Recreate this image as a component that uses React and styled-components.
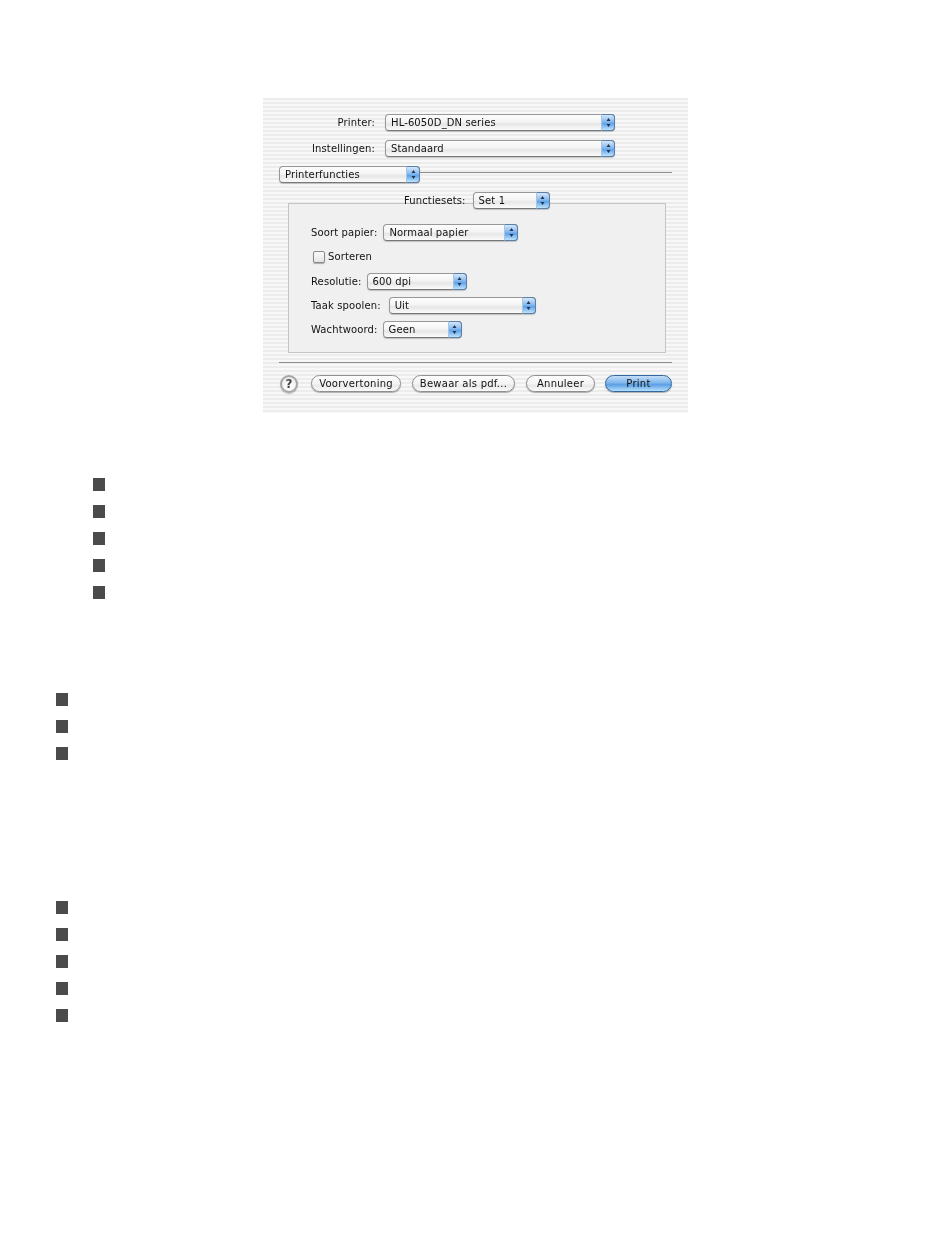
import React from 'react';
import styled, { createGlobalStyle } from 'styled-components';

const GlobalStyle = createGlobalStyle`
  html, body {
    margin: 0;
    background: #fff;
  }
  body {
    font-family: "DejaVu Sans", "Liberation Sans", sans-serif;
  }
`;

const Page = styled.div`
  width: 950px;
  height: 1254px;
  padding-top: 98px;
  box-sizing: border-box;
  overflow: hidden;
`;

const Dialog = styled.div`
  width: 425px;
  height: 315px;
  margin-left: 263px;
  padding: 16px 16px 0;
  box-sizing: border-box;
  background: repeating-linear-gradient(to bottom, #ececec 0, #ececec 2px, #f8f8f8 2px, #f8f8f8 4px);
  color: #111;
  font-size: 10px;
  letter-spacing: 0.12px;
  filter: blur(0.35px);
`;

const Row = styled.div`
  display: flex;
  align-items: center;
  height: 17px;
  margin-top: ${p => p.$top || 0}px;
`;

const Label = styled.span`
  width: ${p => p.$width}px;
  text-align: right;
  padding-right: 10px;
  box-sizing: border-box;
  white-space: nowrap;
`;

const SelectBox = styled.div`
  display: flex;
  align-items: stretch;
  width: ${p => p.$width}px;
  height: 17px;
  box-sizing: border-box;
  flex: none;
  border: 1px solid #979797;
  border-bottom-color: #777;
  border-radius: 4px;
  background: linear-gradient(to bottom, #fdfdfd 0%, #f4f4f4 45%, #e6e6e6 60%, #fbfbfb 100%);
  box-shadow: 0 1px 1px rgba(0, 0, 0, 0.2);
  position: relative;
  z-index: 1;
`;

const SelectText = styled.span`
  flex: 1;
  padding-left: 5px;
  line-height: 15px;
  white-space: nowrap;
`;

const Stepper = styled.span`
  display: flex;
  align-items: center;
  justify-content: center;
  width: 14px;
  margin: -1px -1px -1px 0;
  border-radius: 0 4px 4px 0;
  border: 1px solid #5b7fa8;
  border-left-color: #a6c6e8;
  box-sizing: border-box;
  background: linear-gradient(to bottom, #d6e7fa 0%, #86b9ee 45%, #5fa3ea 58%, #bfe3fb 100%);
`;

const Select = ({ width, children }) => (
  <SelectBox $width={width}>
    <SelectText>{children}</SelectText>
    <Stepper>
      <svg width="7" height="11" viewBox="0 0 7 11">
        <path d="M3.5 1 L5.5 4 H1.5 Z M1.5 7 H5.5 L3.5 10 Z" fill="#24344c" />
      </svg>
    </Stepper>
  </SelectBox>
);

const Rule = styled.div`
  flex: 1;
  height: 1px;
  margin-bottom: 5px;
  background: #8c8c8c;
`;

const SetsRow = styled(Row)`
  padding-left: 125px;
`;

const SetsLabel = styled.span`
  padding-right: 7px;
`;

const Panel = styled.div`
  width: 378px;
  height: 150px;
  margin: -6px 0 0 9px;
  padding: 20px 0 0 22px;
  box-sizing: border-box;
  display: flex;
  flex-direction: column;
  gap: 7.3px;
  background: #f0f0f0;
  border: 1px solid #c4c4c4;
`;

const FieldLabel = styled.span`
  margin-right: ${p => p.$gap}px;
  white-space: nowrap;
`;

const CheckRow = styled(Row)`
  padding-left: 2px;
  gap: 3px;
`;

const CheckBox = styled.span`
  width: 12px;
  height: 12px;
  box-sizing: border-box;
  border: 1px solid #8a8a8a;
  border-radius: 2px;
  background: linear-gradient(to bottom, #fafafa, #e4e4e4);
  box-shadow: 0 1px 1px rgba(0, 0, 0, 0.3);
`;

const Separator = styled.div`
  height: 1px;
  margin-top: 9px;
  background: #8c8c8c;
`;

const ButtonBar = styled.div`
  display: flex;
  align-items: center;
  height: 17px;
  margin-top: 12px;
  letter-spacing: 0.25px;
`;

const HelpButton = styled.span`
  display: flex;
  align-items: center;
  justify-content: center;
  width: 18px;
  height: 18px;
  margin: 0 13px 0 1px;
  box-sizing: border-box;
  flex: none;
  border: 2px solid #a6a6a6;
  border-radius: 50%;
  background: radial-gradient(circle at 50% 70%, #fff 0%, #f2f2f2 60%, #dcdcdc 100%);
  box-shadow: 0 1px 1px rgba(0, 0, 0, 0.25);
  font-size: 12px;
  font-weight: bold;
  color: #444;
`;

const PushButton = styled.span`
  display: flex;
  align-items: center;
  justify-content: center;
  width: ${p => p.$width}px;
  height: 17px;
  margin-right: ${p => p.$gap || 0}px;
  box-sizing: border-box;
  flex: none;
  border: 1px solid ${p => (p.$primary ? '#34679f' : '#8f8f8f')};
  border-radius: 9px;
  background: ${p =>
    p.$primary
      ? 'linear-gradient(to bottom, #c4def7 0%, #7fb6ec 45%, #5c9fe6 58%, #b5e0fb 100%)'
      : 'linear-gradient(to bottom, #fdfdfd 0%, #f4f4f4 50%, #e9e9e9 65%, #fbfbfb 100%)'};
  box-shadow: 0 1px 1px rgba(0, 0, 0, 0.3);
  white-space: nowrap;
`;

const BulletList = styled.ul`
  list-style: none;
  margin: ${p => p.$top}px 0 0 ${p => p.$left}px;
  padding: 0;
  display: flex;
  flex-direction: column;
  gap: 14px;
`;

const Bullet = styled.li`
  width: 12px;
  height: 13px;
  background: #4b4b4b;
`;

const Bullets = ({ count, top, left }) => (
  <BulletList $top={top} $left={left}>
    {Array.from({ length: count }, (_, i) => <Bullet key={i} />)}
  </BulletList>
);

export default function App() {
  return (
    <Page>
      <GlobalStyle />
      <Dialog>
        <Row>
          <Label $width={106}>Printer:</Label>
          <Select width={230}>HL-6050D_DN series</Select>
        </Row>
        <Row $top={9}>
          <Label $width={106}>Instellingen:</Label>
          <Select width={230}>Standaard</Select>
        </Row>
        <Row $top={9}>
          <Select width={141}>Printerfuncties</Select>
          <Rule />
        </Row>
        <SetsRow $top={9}>
          <SetsLabel>Functiesets:</SetsLabel>
          <Select width={77}>Set 1</Select>
        </SetsRow>
        <Panel>
          <Row>
            <FieldLabel $gap={6}>Soort papier:</FieldLabel>
            <Select width={135}>Normaal papier</Select>
          </Row>
          <CheckRow>
            <CheckBox />
            <span>Sorteren</span>
          </CheckRow>
          <Row>
            <FieldLabel $gap={5}>Resolutie:</FieldLabel>
            <Select width={100}>600 dpi</Select>
          </Row>
          <Row>
            <FieldLabel $gap={8}>Taak spoolen:</FieldLabel>
            <Select width={147}>Uit</Select>
          </Row>
          <Row>
            <FieldLabel $gap={5}>Wachtwoord:</FieldLabel>
            <Select width={79}>Geen</Select>
          </Row>
        </Panel>
        <Separator />
        <ButtonBar>
          <HelpButton>?</HelpButton>
          <PushButton $width={90} $gap={11}>Voorvertoning</PushButton>
          <PushButton $width={103} $gap={11}>Bewaar als pdf...</PushButton>
          <PushButton $width={69} $gap={10}>Annuleer</PushButton>
          <PushButton $width={67} $primary>Print</PushButton>
        </ButtonBar>
      </Dialog>
      <Bullets count={5} top={65} left={93} />
      <Bullets count={3} top={94} left={56} />
      <Bullets count={5} top={141} left={56} />
    </Page>
  );
}
